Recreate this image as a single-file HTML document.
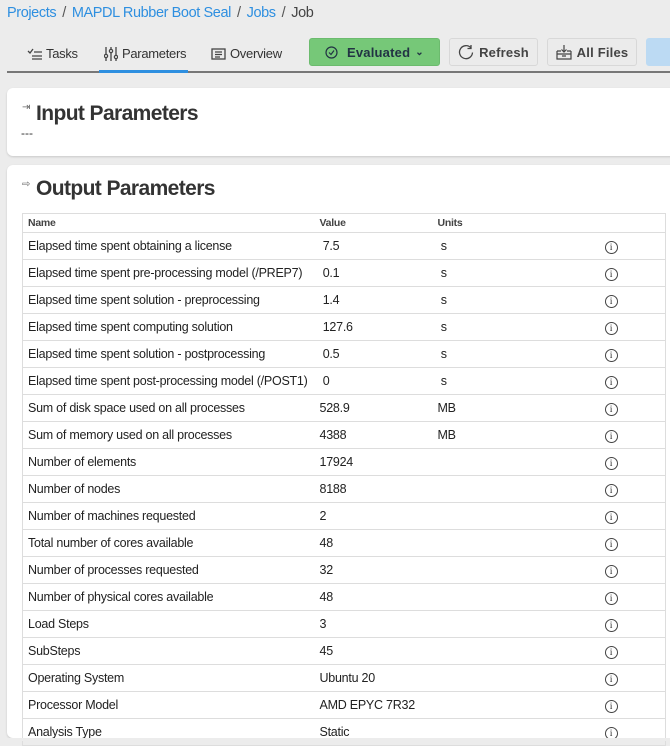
<!DOCTYPE html>
<html><head><meta charset="utf-8"><style>
*{box-sizing:border-box;margin:0;padding:0}
body{width:670px;height:741px;overflow:hidden;background:#ececec;font-family:"Liberation Sans",sans-serif;color:#333;position:relative}
.bc{position:absolute;left:7px;top:5px;font-size:14.5px;letter-spacing:-0.4px;color:#444}
.bc a{color:#2e8fe0;text-decoration:none}
.bc .s{margin:0 6px;color:#555}
.tab{position:absolute;top:46px;font-size:13px;letter-spacing:-0.3px;color:#333;display:flex;align-items:center;gap:4px}
.line{position:absolute;left:7px;right:0;top:71px;height:2px;background:#777}
.ul{position:absolute;left:99px;top:70px;width:89px;height:3px;background:#2e8fe0}
.btn{position:absolute;top:38px;height:28px;border:1px solid #d8d8d8;border-radius:3px;background:#ebebeb;font-size:13px;font-weight:bold;color:#444;display:flex;align-items:center;justify-content:center;gap:5px;letter-spacing:0.2px}
.card{position:absolute;left:7px;right:-10px;background:#fff;border-radius:6px;box-shadow:0 1px 2px rgba(0,0,0,.15)}
h2{position:absolute;left:29px;font-size:21px;font-weight:bold;color:#333;letter-spacing:-0.6px}
.ic{position:absolute;left:22px;font-size:10px;color:#666}
table{position:absolute;left:22px;top:213px;width:644px;border-collapse:collapse;font-size:12.5px;letter-spacing:-0.25px}
td,th{border-bottom:1px solid #ddd;text-align:left;padding:0 0 0 5px}
th{height:19px;font-size:10.5px;font-weight:bold;color:#444}
td{height:27px;color:#222}
table{border:1px solid #ddd}
.i{display:inline-block;width:13px;height:13px;border:1px solid #444;border-radius:50%;font-size:9px;text-align:center;line-height:11px;font-family:"Liberation Serif",serif}
</style></head><body>
<div class="bc"><a>Projects</a><span class="s">/</span><a>MAPDL Rubber Boot Seal</a><span class="s">/</span><a>Jobs</a><span class="s">/</span>Job</div>
<div class="tab" style="left:27px"><svg width="15" height="12" viewBox="0 0 15 12" fill="none" stroke="#444" stroke-width="1.3"><path d="M1 3l2 2 3-4M7 4h8M5 8h10M5 11h10"/></svg>Tasks</div>
<div class="tab" style="left:104px"><svg width="14" height="14" viewBox="0 0 14 14" fill="none" stroke="#444" stroke-width="1.3"><path d="M2 0v14M7 0v14M12 0v14"/><circle cx="2" cy="9" r="1.6" fill="#fff"/><circle cx="7" cy="4" r="1.6" fill="#fff"/><circle cx="12" cy="10" r="1.6" fill="#fff"/></svg>Parameters</div>
<div class="tab" style="left:211px"><svg width="15" height="12" viewBox="0 0 15 12" fill="none" stroke="#444" stroke-width="1.3"><rect x="1" y="1" width="13" height="10"/><path d="M4 4h7M4 6.5h7M4 9h5"/></svg>Overview</div>
<div class="line"></div><div class="ul"></div>
<div class="btn" style="left:309px;width:131px;background:#76c878;border-color:#6cbb6e;color:#234"><svg width="13" height="13" viewBox="0 0 13 13" fill="none" stroke="#234" stroke-width="1.2"><circle cx="6.5" cy="6.5" r="5.5"/><path d="M4 6.5l2 2 3-4"/></svg>&nbsp;Evaluated <span style="font-size:10px">&#8964;</span></div>
<div class="btn" style="left:449px;width:89px"><svg width="16" height="16" viewBox="0 0 16 16" fill="none" stroke="#444" stroke-width="1.3"><path d="M13 4A6.5 6.5 0 1 0 14.5 8.5M13 1v3.5H9.5"/></svg>Refresh</div>
<div class="btn" style="left:547px;width:90px"><svg width="16" height="15" viewBox="0 0 16 15" fill="none" stroke="#444" stroke-width="1.2"><path d="M8 0v7M5.5 4.5L8 7l2.5-2.5M1 6h4M11 6h4M1 6v8h14V6M1 9h14M6 11h4"/></svg>All Files</div>
<div class="btn" style="left:646px;width:40px;background:#bcdaf3;border-color:#bcdaf3"></div>
<div class="card" style="top:88px;height:68px"><span class="ic" style="top:14px;left:15px">&#8677;</span><h2 style="left:29px;top:14px">Input Parameters</h2><div style="position:absolute;left:14px;top:38px;font-size:12px">---</div></div>
<div class="card" style="top:165px;height:573px"><span class="ic" style="top:14px;left:15px">&#8680;</span><h2 style="left:29px;top:12px">Output Parameters</h2></div>
<table>
<tr><th style="width:292px">Name</th><th style="width:118px">Value</th><th style="width:167px">Units</th><th></th></tr>
<tr><td>Elapsed time spent obtaining a license</td><td>&nbsp;7.5</td><td>&nbsp;s</td><td><span class="i">i</span></td></tr>
<tr><td>Elapsed time spent pre-processing model (/PREP7)</td><td>&nbsp;0.1</td><td>&nbsp;s</td><td><span class="i">i</span></td></tr>
<tr><td>Elapsed time spent solution - preprocessing</td><td>&nbsp;1.4</td><td>&nbsp;s</td><td><span class="i">i</span></td></tr>
<tr><td>Elapsed time spent computing solution</td><td>&nbsp;127.6</td><td>&nbsp;s</td><td><span class="i">i</span></td></tr>
<tr><td>Elapsed time spent solution - postprocessing</td><td>&nbsp;0.5</td><td>&nbsp;s</td><td><span class="i">i</span></td></tr>
<tr><td>Elapsed time spent post-processing model (/POST1)</td><td>&nbsp;0</td><td>&nbsp;s</td><td><span class="i">i</span></td></tr>
<tr><td>Sum of disk space used on all processes</td><td>528.9</td><td>MB</td><td><span class="i">i</span></td></tr>
<tr><td>Sum of memory used on all processes</td><td>4388</td><td>MB</td><td><span class="i">i</span></td></tr>
<tr><td>Number of elements</td><td>17924</td><td></td><td><span class="i">i</span></td></tr>
<tr><td>Number of nodes</td><td>8188</td><td></td><td><span class="i">i</span></td></tr>
<tr><td>Number of machines requested</td><td>2</td><td></td><td><span class="i">i</span></td></tr>
<tr><td>Total number of cores available</td><td>48</td><td></td><td><span class="i">i</span></td></tr>
<tr><td>Number of processes requested</td><td>32</td><td></td><td><span class="i">i</span></td></tr>
<tr><td>Number of physical cores available</td><td>48</td><td></td><td><span class="i">i</span></td></tr>
<tr><td>Load Steps</td><td>3</td><td></td><td><span class="i">i</span></td></tr>
<tr><td>SubSteps</td><td>45</td><td></td><td><span class="i">i</span></td></tr>
<tr><td>Operating System</td><td>Ubuntu 20</td><td></td><td><span class="i">i</span></td></tr>
<tr><td>Processor Model</td><td>AMD EPYC 7R32</td><td></td><td><span class="i">i</span></td></tr>
<tr><td>Analysis Type</td><td>Static</td><td></td><td><span class="i">i</span></td></tr>
</table>
<div style="position:absolute;left:0;right:0;top:738px;height:3px;background:#ececec"></div>
</body></html>
